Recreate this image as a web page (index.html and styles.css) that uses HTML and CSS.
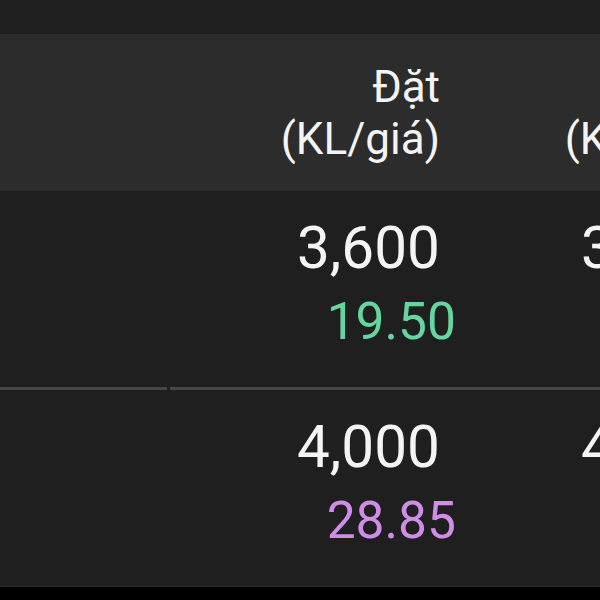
FILE: index.html
```html
<!DOCTYPE html>
<html lang="vi">
<head>
<meta charset="utf-8">
<link rel="stylesheet" href="styles.css">
</head>
<body>
<div class="screen">
  <div class="topbar"></div>
  <div class="row header">
    <div class="cell first"></div>
    <div class="cell"><div class="h">Đặt</div><div class="h">(KL/giá)</div></div>
    <div class="cell"><div class="h">Khớp</div><div class="h">(KL/giá)</div></div>
  </div>
  <div class="row data">
    <div class="cell first"></div>
    <div class="cell"><div class="vol">3,600</div><div class="price up">19.50</div></div>
    <div class="cell"><div class="vol">3,600</div><div class="price up">19.50</div></div>
  </div>
  <div class="sep"><span class="seg a"></span><span class="seg b"></span></div>
  <div class="row data">
    <div class="cell first"></div>
    <div class="cell"><div class="vol">4,000</div><div class="price ceil">28.85</div></div>
    <div class="cell"><div class="vol">4,000</div><div class="price ceil">28.85</div></div>
  </div>
  <div class="bottom"></div>
</div>
</body>
</html>
```
FILE: styles.css
```css
html, body {
  margin: 0;
  padding: 0;
  background: #000;
  overflow: hidden;
}
.screen {
  width: 600px;
  height: 600px;
  overflow: hidden;
  display: flex;
  flex-direction: column;
  font-family: Roboto, "Noto Sans", sans-serif;
  color: #f4f4f4;
}
.topbar {
  height: 34px;
  background: #1f1f1f;
  flex: none;
}
.row {
  display: flex;
  flex: none;
  width: 900px;
}
.cell {
  flex: none;
  width: 284px;
  box-sizing: border-box;
  padding-right: 12px;
  display: flex;
  flex-direction: column;
  align-items: flex-end;
}
.cell.first {
  width: 168px;
}
.header {
  height: 157px;
  background: #2c2c2c;
  align-items: center;
}
.h {
  font-size: 44px;
  line-height: 52px;
  white-space: nowrap;
}
.data {
  height: 196px;
  background: #1f1f1f;
}
.vol {
  margin-top: 22px;
  font-size: 58.5px;
  line-height: 70px;
  white-space: nowrap;
}
.price {
  margin-top: 6px;
  margin-right: -16px;
  font-size: 51.5px;
  line-height: 66px;
  white-space: nowrap;
}
.up { color: #66d6a0; }
.ceil { color: #cf8de8; }
.sep {
  height: 3px;
  flex: none;
  display: flex;
  background: #1f1f1f;
}
.seg {
  display: block;
  height: 3px;
  background: #474747;
}
.seg.a { width: 167px; }
.seg.b { flex: 1; margin-left: 3px; }
.bottom {
  flex: 1;
  background: #000;
  border-top: 1px solid #2a2a2a;
}
```
